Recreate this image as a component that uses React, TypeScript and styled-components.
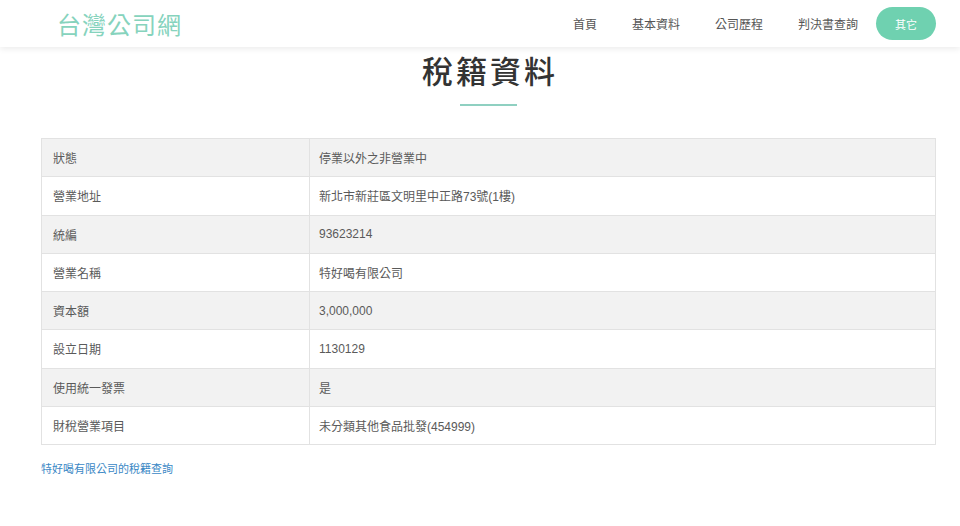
import React from 'react';
import styled, { createGlobalStyle } from 'styled-components';

const GlobalStyle = createGlobalStyle`
  html, body {
    margin: 0;
    padding: 0;
    background: #fff;
    font-family: "Liberation Sans", "Noto Sans CJK TC", sans-serif;
  }
  * {
    box-sizing: border-box;
  }
`;

const Header = styled.header`
  height: 47px;
  background: #fff;
  box-shadow: 0 2px 6px rgba(0, 0, 0, 0.08);
  display: flex;
  align-items: center;
  justify-content: space-between;
  padding: 0 24px 0 57px;
  position: relative;
  z-index: 2;
`;

const Logo = styled.div`
  color: #86d3bd;
  font-size: 24px;
  font-weight: 400;
  letter-spacing: 1px;
  font-family: "Noto Sans CJK TC", sans-serif;
`;

const Nav = styled.nav`
  display: flex;
  align-items: center;
`;

const NavItem = styled.a`
  color: #555;
  font-size: 12px;
  margin-right: 35px;
  text-decoration: none;
  font-family: "Noto Sans CJK TC", sans-serif;
`;

const NavButton = styled.a`
  width: 60px;
  height: 33px;
  border-radius: 17px;
  background: #6fd1b0;
  color: #fff;
  font-size: 11px;
  display: flex;
  align-items: center;
  justify-content: center;
  margin-left: -17px;
  font-family: "Noto Sans CJK TC", sans-serif;
`;

const Main = styled.main`
  width: 895px;
  margin-left: 41px;
`;

const Title = styled.h1`
  margin: 3px 0 0;
  text-align: center;
  font-size: 31px;
  font-weight: 500;
  color: #333;
  line-height: 40px;
  letter-spacing: 3px;
  padding-left: 3px;
  font-family: "Noto Sans CJK TC", sans-serif;
`;

const Underline = styled.div`
  width: 57px;
  height: 2px;
  background: #8fd0c1;
  margin: 14px auto 32px;
`;

const Table = styled.table`
  width: 100%;
  border-collapse: collapse;
  border: 1px solid #e2e2e2;
`;

const Row = styled.tr<{ $shade: boolean }>`
  background: ${(p) => (p.$shade ? '#f2f2f2' : '#fff')};
`;

const Cell = styled.td<{ $label?: boolean }>`
  height: 38.25px;
  padding: ${(p) => (p.$label ? '0 11px' : '0 9px')};
  font-size: 12px;
  color: #5a5a5a;
  border-top: 1px solid #e2e2e2;
  width: ${(p) => (p.$label ? '268px' : 'auto')};
  border-right: ${(p) => (p.$label ? '1px solid #e2e2e2' : 'none')};
  font-family: "Liberation Sans", "Noto Sans CJK TC", sans-serif;
`;

const Link = styled.a`
  display: block;
  margin-top: 15px;
  font-size: 11px;
  color: #3a88c5;
  text-decoration: none;
  font-family: "Noto Sans CJK TC", sans-serif;
`;

const rows: [string, string][] = [
  ['狀態', '停業以外之非營業中'],
  ['營業地址', '新北市新莊區文明里中正路73號(1樓)'],
  ['統編', '93623214'],
  ['營業名稱', '特好喝有限公司'],
  ['資本額', '3,000,000'],
  ['設立日期', '1130129'],
  ['使用統一發票', '是'],
  ['財稅營業項目', '未分類其他食品批發(454999)'],
];

const App: React.FC = () => {
  return (
    <>
      <GlobalStyle />
      <Header>
        <Logo>台灣公司網</Logo>
        <Nav>
          <NavItem>首頁</NavItem>
          <NavItem>基本資料</NavItem>
          <NavItem>公司歷程</NavItem>
          <NavItem>判決書查詢</NavItem>
          <NavButton>其它</NavButton>
        </Nav>
      </Header>
      <Main>
        <Title>稅籍資料</Title>
        <Underline />
        <Table>
          <tbody>
            {rows.map(([label, value], i) => (
              <Row key={label} $shade={i % 2 === 0}>
                <Cell $label>{label}</Cell>
                <Cell>{value}</Cell>
              </Row>
            ))}
          </tbody>
        </Table>
        <Link>特好喝有限公司的稅籍查詢</Link>
      </Main>
    </>
  );
};

export default App;
